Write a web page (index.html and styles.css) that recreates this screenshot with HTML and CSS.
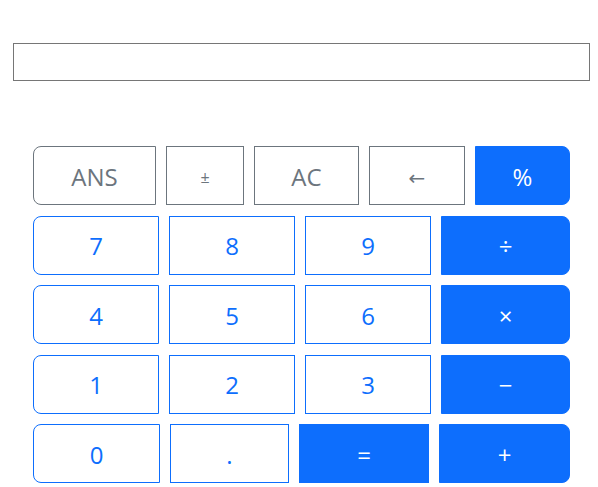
FILE: index.html
```html
<!DOCTYPE html>
<html lang="en">
<head>
<meta charset="utf-8">
<title>Calculator</title>
<link rel="stylesheet" href="styles.css">
</head>
<body>
<main class="calc">
  <input class="display" type="text" aria-label="Display">
  <div class="keypad">
    <div class="row row-top">
      <button class="key outline-grey">ANS</button>
      <button class="key outline-grey small-text">±</button>
      <button class="key outline-grey">AC</button>
      <button class="key outline-grey arrow">←</button>
      <button class="key solid">%</button>
    </div>
    <div class="row row-digits">
      <button class="key outline-blue">7</button>
      <button class="key outline-blue">8</button>
      <button class="key outline-blue">9</button>
      <button class="key solid">÷</button>
    </div>
    <div class="row row-digits">
      <button class="key outline-blue">4</button>
      <button class="key outline-blue">5</button>
      <button class="key outline-blue">6</button>
      <button class="key solid">×</button>
    </div>
    <div class="row row-digits">
      <button class="key outline-blue">1</button>
      <button class="key outline-blue">2</button>
      <button class="key outline-blue">3</button>
      <button class="key solid">−</button>
    </div>
    <div class="row row-bottom">
      <button class="key outline-blue">0</button>
      <button class="key outline-blue">.</button>
      <button class="key solid">=</button>
      <button class="key solid">+</button>
    </div>
  </div>
</main>
</body>
</html>
```

FILE: styles.css
```css
* { box-sizing: border-box; }

html, body {
  margin: 0;
  padding: 0;
  background: #fff;
}

body {
  font-family: "Open Sans", "Noto Sans", "DejaVu Sans", sans-serif;
}

.calc {
  display: flex;
  flex-direction: column;
  padding-top: 43px;
}

.display {
  display: block;
  margin: 0 8px 0 13px;
  height: 38px;
  border: 1px solid #767676;
  border-radius: 0;
  padding: 0 6px;
  font: inherit;
  font-size: 16px;
  background: #fff;
  outline: none;
}

.keypad {
  margin-top: 65px;
  padding: 0 28px 0 33px;
  display: flex;
  flex-direction: column;
  gap: 10.5px;
}

.row {
  display: grid;
  column-gap: 10px;
  height: 59px;
}

.row-top { grid-template-columns: 123fr 78fr 105fr 96fr 95fr; }
.row-digits { grid-template-columns: 126fr 126fr 126fr 129fr; }
.row-bottom { grid-template-columns: 127fr 119fr 130fr 131fr; }

.key {
  margin: 0;
  padding: 2px 0 0;
  font-family: inherit;
  font-size: 24px;
  font-weight: 400;
  line-height: 1;
  border: 1px solid transparent;
  border-radius: 0;
  background: #fff;
  display: flex;
  align-items: center;
  justify-content: center;
  cursor: pointer;
}

.row .key:first-child {
  border-top-left-radius: 8px;
  border-bottom-left-radius: 8px;
}

.row .key:last-child {
  border-top-right-radius: 8px;
  border-bottom-right-radius: 8px;
}

.outline-grey {
  color: #6c757d;
  border-color: #6c757d;
}

.outline-blue {
  color: #0d6efd;
  border-color: #0d6efd;
}

.solid {
  color: #fff;
  background: #0d6efd;
  border-color: #0d6efd;
}

.small-text {
  font-size: 16px;
}

.arrow {
  font-family: "DejaVu Sans", sans-serif;
  font-size: 20px;
  padding-top: 4px;
}
```
